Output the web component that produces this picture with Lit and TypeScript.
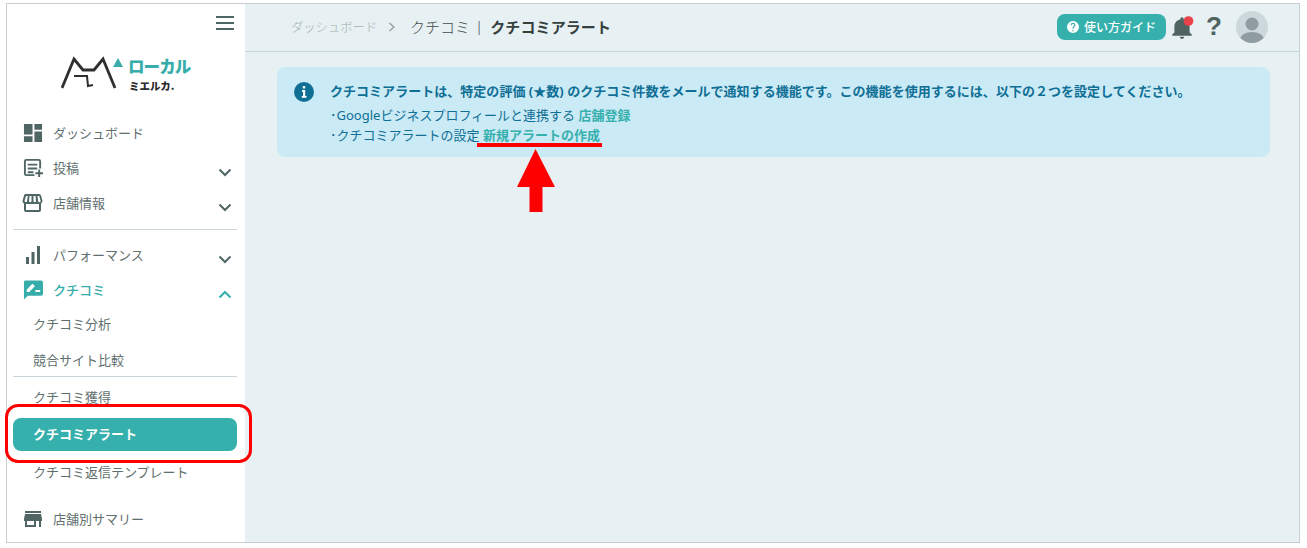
import { LitElement, html, css, svg } from "lit";
import { customElement } from "lit/decorators.js";

const chevronDown = html`<svg class="chev" viewBox="0 0 14 9"><path d="M1.500 1.500 7 7l5.500-5.500" fill="none" stroke="currentColor" stroke-width="2"/></svg>`;
const chevronUp = html`<svg class="chev" viewBox="0 0 14 9"><path d="M1.500 7.500 7 2l5.500 5.500" fill="none" stroke="currentColor" stroke-width="2"/></svg>`;

const ic = {
  dash: svg`<path d="M0 0h9v11H0zM0 13h9v6H0zM11 0h8v6h-8zM11 8h8v11h-8z"/>`,
  post: svg`<path d="M2.500 0h13A2.500 2.500 0 0 1 18 2.500V10h-2V2.500a.5.5 0 0 0-.5-.5h-13a.5.5 0 0 0-.5.5v13a.5.5 0 0 0 .5.5H11v2H2.500A2.500 2.500 0 0 1 0 15.500v-13A2.500 2.500 0 0 1 2.500 0zM4 5h10v2H4zM4 9h10v2H4zM4 13h6v2H4zM15 11h2v3h3v2h-3v3h-2v-3h-3v-2h3z"/>`,
  shop: svg`<path fill-rule="evenodd" d="M4 0h12a2 2 0 0 1 2 1.500L19.500 7a3 3 0 0 1-1.500 2.500V16a2 2 0 0 1-2 2H3a2 2 0 0 1-2-2V9.500A3 3 0 0 1-.5 7L1 1.500A2 2 0 0 1 4 0zM3 10v6h13v-6zM3 2 1.500 7.300c.2 1 2 1 2.500.2L4.800 2zM6.500 2 6 7.500c.5 1 2 1 2.500 0V2zM10.500 2v5.500c.5 1 2 1 2.500 0L12.500 2zM14.500 2l.7 5.500c.5 1 2.300 1 2.500 0L16.300 2z"/>`,
  bars: svg`<path d="M3 11h3v7H3zM8.500 6h3v12h-3zM14 0h3v18h-3z"/>`,
  review: svg`<path fill-rule="evenodd" d="M2 0h17a2 2 0 0 1 2 2v12a2 2 0 0 1-2 2H5l-4 4V2a2 2 0 0 1 1-2zM4 12v-2.500l6-6 2.500 2.500-6 6zM13 10h5v2h-5z"/>`,
  store: svg`<path d="M1 0h16v2H1zM1 3h16l1 5v2h-1v6h-2v-6h-3v6H1v-6H0V8zM3 10v4h7v-4z"/>`,
};

@customElement("app-root")
export class AppRoot extends LitElement {
  static styles = css`
    :host {
      display: block;
      height: 548px;
      box-sizing: border-box;
      padding: 3px 7px 5px 6px;
      font-family: "Noto Sans", "Noto Sans CJK JP", sans-serif;
      background: #fff;
      position: relative;
      overflow: hidden;
    }
    .frame {
      display: flex;
      height: 100%;
      box-sizing: border-box;
      border: 1px solid #c9cfd0;
    }
    .side {
      width: 238px;
      flex: none;
      background: #fff;
      display: flex;
      flex-direction: column;
      color: #5f6f6e;
      font-size: 13px;
      overflow: hidden;
    }
    .burger {
      height: 40px;
      display: flex;
      justify-content: flex-end;
      align-items: center;
      padding-right: 11px;
      box-sizing: border-box;
      padding-bottom: 3px;
    }
    .burger svg { width: 18px; height: 14px; display: block; }
    .logo {
      height: 71px;
      box-sizing: border-box;
      padding: 12px 0 0 54px;
      display: flex;
      gap: 5px;
    }
    .logo svg.mark { width: 62px; height: 33px; flex: none; }
    .logo .words { display: flex; flex-direction: column; }
    .logo .big {
      color: #36adab;
      font-weight: 900;
      font-size: 16.500px;
      line-height: 21px;
      letter-spacing: -0.9px;
      font-family: "Noto Sans CJK JP", sans-serif;
    }
    .logo .small {
      color: #2b2b2b;
      font-weight: 900;
      font-size: 10.500px;
      line-height: 14px;
      margin-top: 2px;
      padding-left: 1px;
      font-family: "Noto Sans CJK JP", sans-serif;
    }
    .row {
      height: 35px;
      display: flex;
      align-items: center;
      padding: 0 14px 0 16px;
      gap: 10px;
      flex: none;
    }
    .row .icon {
      width: 20px;
      height: 20px;
      flex: none;
      fill: #4f6664;
      overflow: visible;
    }
    .row .label { flex: 1; margin-top: -1px; }
    .chev { width: 14px; height: 9px; color: #4f6664; margin-top: 9px; flex: none; margin-right: -1px; }
    .row.on { color: #36adab; font-weight: 500; }
    .row.on .icon { fill: #36adab; }
    .row.on .chev { color: #36adab; }
    .rule { height: 1px; background: #c9d4da; margin: 0 8px 0 6px; flex: none; }
    .gap-a { height: 9px; flex: none; }
    .gap-b { height: 7px; flex: none; }
    .sub { height: 34px; display: flex; align-items: center; padding-left: 26px; flex: none; }
    .sub.first { margin-top: -1px; }
    .sub.second { height: 35px; margin-top: 2px; margin-bottom: -1px; }
    .sub.third { margin-top: 2px; }
    .pill {
      height: 33px;
      box-sizing: border-box;
      margin: 5px 8px 3px 6px;
      padding: 0 0 2px 20px;
      background: #36b0ad;
      color: #fff;
      font-weight: 700;
      border-radius: 8px;
      display: flex;
      align-items: center;
      flex: none;
    }
    .row.last { margin-top: 13px; }
    .main { flex: 1; min-width: 0; background: #e7f0f2; display: flex; flex-direction: column; }
    .top {
      height: 48px;
      box-sizing: border-box;
      border-bottom: 1px solid #c9d6d8;
      display: flex;
      align-items: center;
      padding: 0 31px 1px 46px;
    }
    .crumb { font-size: 12.300px; color: #a6b0b2; font-weight: 300; }
    .sep { width: 8px; height: 10px; margin: 0 14px 0 11px; color: #8f9a9c; }
    .parent { font-size: 15px; color: #3f4b4c; font-weight: 300; margin-top: -2px; }
    .bar { font-size: 15px; color: #3f4b4c; margin: -2px 7px 0 5px; font-weight: 300; }
    .title { font-size: 15px; font-weight: 700; color: #35413f; margin-top: -2px; letter-spacing: 0.1px; }
    .spacer { flex: 1; }
    .guide {
      width: 109px;
      height: 26px;
      border-radius: 8px;
      background: #36b0ad;
      color: #fff;
      font-size: 12px;
      font-weight: 500;
      display: flex;
      align-items: center;
      padding-left: 10px;
      gap: 5px;
      box-sizing: border-box;
    }
    .guide svg { width: 12px; height: 12px; flex: none; }
    .bell { width: 26px; height: 26px; margin-left: 3px; flex: none; }
    .q { font-family: "Liberation Sans", sans-serif; font-weight: 700; font-size: 26px; color: #4f6361; width: 18px; margin: -2px 13px 0 10px; text-align: center; line-height: 30px; }
    .avatar { width: 32px; height: 32px; flex: none; }
    .content { padding: 15px 29px 0 32px; }
    .notice {
      height: 90px;
      box-sizing: border-box;
      background: #caeaf6;
      border-radius: 8px;
      display: flex;
      padding: 13px 0 0 17px;
      gap: 16px;
      color: #0f6f95;
      font-size: 13px;
    }
    .notice svg { width: 20px; height: 20px; flex: none; margin-top: 2px; }
    .notice .lines { display: flex; flex-direction: column; }
    .notice .head { font-weight: 700; line-height: 22px; height: 25px; white-space: nowrap; letter-spacing: 0.03px; }
    .notice .line { line-height: 20px; white-space: nowrap; }
    .notice a { color: #36b0ad; font-weight: 700; text-decoration: none; }
    .callout {
      position: absolute;
      left: 5px;
      top: 404px;
      width: 247px;
      height: 59px;
      box-sizing: border-box;
      border: 3px solid #f00;
      border-radius: 13px;
    }
    .underline { position: absolute; left: 477px; top: 143px; width: 125px; height: 4px; background: #f00; }
    .arrow { position: absolute; left: 516px; top: 148px; width: 40px; height: 64px; }
  `;

  render() {
    return html`
      <div class="frame">
        <nav class="side">
          <div class="burger">
            <svg viewBox="0 0 18 14" fill="#4f6664"><path d="M0 0h18v2H0zM0 6h18v2H0zM0 12h18v2H0z"/></svg>
          </div>
          <div class="logo">
            <svg class="mark" viewBox="0 0 62 33" fill="none">
              <path d="M1 32 13 3l9 11h11l9-11 12 29" stroke="#2f2f2f" stroke-width="2.800"/>
              <path d="M13 20h13l1 10 5-1" stroke="#2f2f2f" stroke-width="2"/>
              <path d="M57 2l5 9H52z" fill="#36adab"/>
            </svg>
            <div class="words"><span class="big">ローカル</span><span class="small">ミエルカ.</span></div>
          </div>
          <div class="row"><svg class="icon" viewBox="-1 -1 21 21">${ic.dash}</svg><span class="label">ダッシュボード</span></div>
          <div class="row"><svg class="icon" viewBox="-1 -1 21 21">${ic.post}</svg><span class="label">投稿</span>${chevronDown}</div>
          <div class="row"><svg class="icon" viewBox="0 -1 20 20">${ic.shop}</svg><span class="label">店舗情報</span>${chevronDown}</div>
          <div class="gap-a"></div>
          <div class="rule"></div>
          <div class="gap-b"></div>
          <div class="row"><svg class="icon" viewBox="0 -1 20 20">${ic.bars}</svg><span class="label">パフォーマンス</span>${chevronDown}</div>
          <div class="row on"><svg class="icon" viewBox="0 0 21 20">${ic.review}</svg><span class="label">クチコミ</span>${chevronUp}</div>
          <div class="sub first">クチコミ分析</div>
          <div class="sub second">競合サイト比較</div>
          <div class="rule"></div>
          <div class="sub third">クチコミ獲得</div>
          <div class="pill">クチコミアラート</div>
          <div class="sub">クチコミ返信テンプレート</div>
          <div class="row last"><svg class="icon" viewBox="-1 -2 20 20">${ic.store}</svg><span class="label">店舗別サマリー</span></div>
        </nav>
        <div class="main">
          <header class="top">
            <span class="crumb">ダッシュボード</span>
            <svg class="sep" viewBox="0 0 8 10"><path d="M1.500 1 6 5 1.500 9" fill="none" stroke="currentColor" stroke-width="1.200"/></svg>
            <span class="parent">クチコミ</span><span class="bar">|</span><span class="title">クチコミアラート</span>
            <span class="spacer"></span>
            <div class="guide">
              <svg viewBox="2 2 20 20"><path fill="#fff" d="M12 2a10 10 0 1 0 0 20 10 10 0 0 0 0-20zm1 17h-2v-2h2v2zm2.070-7.750-.900.920C13.450 12.900 13 13.500 13 15h-2v-.500c0-1.100.450-2.100 1.170-2.830l1.240-1.260A2 2 0 1 0 10 9H8a4 4 0 1 1 8 0c0 .880-.360 1.680-.930 2.250z"/></svg>
              使い方ガイド
            </div>
            <svg class="bell" viewBox="0 0 24 24">
              <path fill="#4f6361" d="M12 23c1.100 0 2-.900 2-2h-4c0 1.100.890 2 2 2zm7-6v-5.500c0-3.070-2-5.640-5.500-6.320V4.500c0-.830-.670-1.500-1.500-1.500s-1.500.670-1.500 1.500v.680C7 5.860 5 8.420 5 11.500V17l-2 2v1h18v-1l-2-2z"/>
              <circle cx="18" cy="6.500" r="4.500" fill="#e8434b"/>
            </svg>
            <span class="q">?</span>
            <svg class="avatar" viewBox="0 0 32 32">
              <defs><clipPath id="c"><circle cx="16" cy="16" r="16"/></clipPath></defs>
              <circle cx="16" cy="16" r="16" fill="#cdd8dd"/>
              <g clip-path="url(#c)" fill="#8f9da2"><circle cx="16" cy="13" r="6.500"/><ellipse cx="16" cy="29" rx="12" ry="8"/></g>
            </svg>
          </header>
          <div class="content">
            <section class="notice">
              <svg viewBox="0 0 20 20"><circle cx="10" cy="10" r="10" fill="#0f6f95"/><path fill="#fff" d="M8.800 4h2.400v2.400H8.800zM8 8h3.200v6H12.500v1.800h-4.700V14H9V9.800H8z"/></svg>
              <div class="lines">
                <div class="head">クチコミアラートは、特定の評価 (★数) のクチコミ件数をメールで通知する機能です。この機能を使用するには、以下の２つを設定してください。</div>
                <div class="line">･Googleビジネスプロフィールと連携する <a>店舗登録</a></div>
                <div class="line">･クチコミアラートの設定 <a>新規アラートの作成</a></div>
              </div>
            </section>
          </div>
        </div>
      </div>
      <div class="callout"></div>
      <div class="underline"></div>
      <svg class="arrow" viewBox="0 0 40 64"><path fill="#f00" d="M19.500 1 39 39H26.500V64H13.500V39H1z"/></svg>
    `;
  }
}
